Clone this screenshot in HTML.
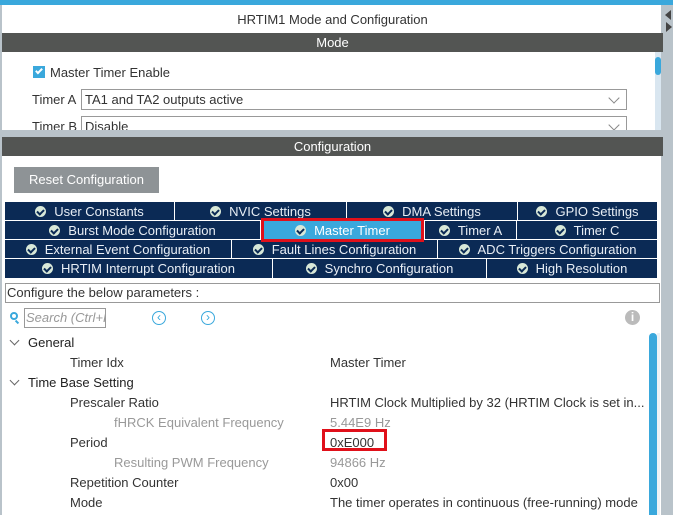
<!DOCTYPE html><html><head><style>
*{margin:0;padding:0;box-sizing:border-box}
body{width:673px;height:515px;overflow:hidden;background:#fff;font-family:"Liberation Sans",sans-serif;font-size:13px;color:#333;position:relative}
.a{position:absolute;white-space:nowrap}
.bar{position:absolute;left:2px;width:661px;height:19px;background:#535553;color:#fff;text-align:center;line-height:19px}
.tr{position:absolute;left:5px;width:652px;height:19px;display:flex;background:#fff;gap:1px}
.tr div{background:#0b2a55;color:#e8eef5;display:flex;align-items:center;justify-content:center;height:18px;font-size:13px}
.ck{display:inline-block;width:11px;height:11px;border-radius:50%;background:#d8e8d8;margin-right:8px;position:relative}
.ck:after{content:"";position:absolute;left:3px;top:2px;width:3px;height:5px;border:solid #0b2a55;border-width:0 2px 2px 0;transform:rotate(45deg)}
.lbl{position:absolute;white-space:nowrap;color:#333}
.g{color:#999}
.chev{position:absolute;left:11px;width:7px;height:7px;border:solid #666;border-width:0 1px 1px 0;transform:rotate(45deg)}
.dd{position:absolute;left:81px;width:546px;height:21px;border:1px solid #999;padding-left:3px;line-height:19px}
.dd:after{content:"";position:absolute;right:8px;top:4px;width:7px;height:7px;border:solid #888;border-width:0 1px 1px 0;transform:rotate(45deg)}
</style></head><body>
<div class="a" style="left:0;top:0;width:673px;height:5px;background:#3aa8dc"></div>
<div class="a" style="left:0;top:5px;width:2px;height:510px;background:#b9c3ca"></div>
<div class="a" style="left:661px;top:5px;width:12px;height:510px;background:#b9c3ca"></div>
<div class="a" style="left:665px;top:10px;width:0;height:0;border:5px solid transparent;border-right:6px solid #444;border-left:0"></div>
<div class="a" style="left:666px;top:22px;width:0;height:0;border:5px solid transparent;border-left:6px solid #444;border-right:0"></div>
<div class="a" style="left:2px;top:12px;width:661px;text-align:center;color:#333">HRTIM1 Mode and Configuration</div>
<div class="bar" style="top:33px">Mode</div>
<div class="a" style="left:655px;top:52px;width:6px;height:78px;background:#d9e6f0"></div>
<div class="a" style="left:655px;top:57px;width:6px;height:18px;background:#3aa8dc;border-radius:3px"></div>
<div class="a" style="left:33px;top:66px;width:12px;height:12px;background:#3aa8dc"></div>
<div class="a" style="left:37px;top:67px;width:4px;height:7px;border:solid #fff;border-width:0 2px 2px 0;transform:rotate(45deg)"></div>
<div class="lbl" style="left:50px;top:65px">Master Timer Enable</div>
<div class="lbl" style="left:32px;top:92px">Timer A</div>
<div class="dd" style="top:89px">TA1 and TA2 outputs active</div>
<div class="lbl" style="left:32px;top:119px">Timer B</div>
<div class="dd" style="top:116px;height:14px;border-bottom:0;overflow:hidden">Disable</div>
<div class="a" style="left:2px;top:130px;width:659px;height:7px;background:#b9c3ca"></div>
<div class="bar" style="top:137px">Configuration</div>
<div class="a" style="left:14px;top:167px;width:145px;height:26px;background:#8e9396;color:#fff;line-height:26px;text-align:center">Reset Configuration</div>
<div class="tr" style="top:202px"><div style="width:169px"><i class="ck"></i>User Constants</div><div style="width:171px"><i class="ck"></i>NVIC Settings</div><div style="width:170px"><i class="ck"></i>DMA Settings</div><div style="flex:1"><i class="ck"></i>GPIO Settings</div></div>
<div class="tr" style="top:221px"><div style="width:255px"><i class="ck"></i>Burst Mode Configuration</div><div style="width:163px;background:#3aa8dc;color:#fff"><i class="ck"></i>Master Timer</div><div style="width:91px"><i class="ck"></i>Timer A</div><div style="flex:1"><i class="ck"></i>Timer C</div></div>
<div class="tr" style="top:240px"><div style="width:226px"><i class="ck"></i>External Event Configuration</div><div style="width:205px"><i class="ck"></i>Fault Lines Configuration</div><div style="flex:1"><i class="ck"></i>ADC Triggers Configuration</div></div>
<div class="tr" style="top:259px;height:20px"><div style="width:267px;height:19px"><i class="ck"></i>HRTIM Interrupt Configuration</div><div style="width:213px;height:19px"><i class="ck"></i>Synchro Configuration</div><div style="flex:1;height:19px"><i class="ck"></i>High Resolution</div></div>
<div class="a" style="left:261px;top:218px;width:163px;height:24px;border:3px solid #e0101a"></div>
<div class="a" style="left:5px;top:283px;width:655px;height:20px;border:1px solid #999;line-height:18px;padding-left:1px">Configure the below parameters :</div>
<div class="a" style="left:10px;top:312px;width:8px;height:8px;border:2px solid #3aa8dc;border-radius:50%"></div>
<div class="a" style="left:16px;top:320px;width:2px;height:4px;background:#3aa8dc;transform:rotate(-45deg)"></div>
<div class="a" style="left:24px;top:308px;width:82px;height:20px;border:1px solid #999;color:#999;font-style:italic;line-height:18px;padding-left:1px;overflow:hidden">Search (Ctrl+F)</div>
<div class="a" style="left:152px;top:311px;width:14px;height:14px;border:1px solid #3aa8dc;border-radius:50%;color:#3aa8dc;font-size:12px;line-height:11px;text-align:center">‹</div>
<div class="a" style="left:201px;top:311px;width:14px;height:14px;border:1px solid #3aa8dc;border-radius:50%;color:#3aa8dc;font-size:12px;line-height:11px;text-align:center">›</div>
<div class="a" style="left:625px;top:310px;width:15px;height:15px;background:#bbb;border-radius:50%;color:#fff;font-weight:bold;font-size:12px;text-align:center;line-height:15px">i</div>
<div class="a" style="left:657px;top:333px;width:3px;height:182px;background:#eef2f5"></div>
<div class="a" style="left:649px;top:333px;width:8px;height:182px;background:#3aa8dc;border-radius:4px 4px 0 0"></div>
<div class="chev" style="top:337px"></div><div class="lbl" style="left:28px;top:335px;color:#222">General</div>
<div class="lbl" style="left:70px;top:355px">Timer Idx</div><div class="lbl" style="left:330px;top:355px">Master Timer</div>
<div class="chev" style="top:377px"></div><div class="lbl" style="left:28px;top:375px;color:#222">Time Base Setting</div>
<div class="lbl" style="left:70px;top:395px">Prescaler Ratio</div><div class="lbl" style="left:330px;top:395px">HRTIM Clock Multiplied by 32 (HRTIM Clock is set in...</div>
<div class="lbl g" style="left:114px;top:415px">fHRCK Equivalent Frequency</div><div class="lbl g" style="left:330px;top:415px">5.44E9 Hz</div>
<div class="lbl" style="left:70px;top:435px">Period</div><div class="lbl" style="left:330px;top:435px">0xE000</div>
<div class="a" style="left:322px;top:429px;width:65px;height:22px;border:3px solid #e0101a"></div>
<div class="lbl g" style="left:114px;top:455px">Resulting PWM Frequency</div><div class="lbl g" style="left:330px;top:455px">94866 Hz</div>
<div class="lbl" style="left:70px;top:475px">Repetition Counter</div><div class="lbl" style="left:330px;top:475px">0x00</div>
<div class="lbl" style="left:70px;top:495px">Mode</div><div class="lbl" style="left:330px;top:495px">The timer operates in continuous (free-running) mode</div>
</body></html>
